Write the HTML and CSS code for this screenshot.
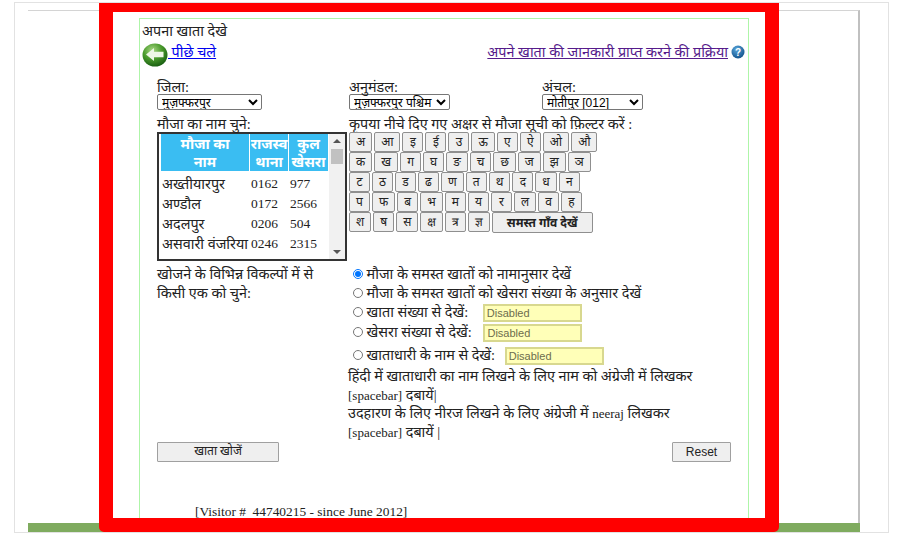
FILE: index.html
```html
<!DOCTYPE html>
<html lang="hi">
<head>
    <meta charset="UTF-8">
    <title>अपना खाता देखे</title>
    <link rel="stylesheet" href="styles.css">
</head>
<body>
    <div class="outer">
        <div class="page">
            <div class="content">
                <div class="title">अपना खाता देखे</div>
                <div class="top-links">
                    <a class="back" href="#">
                        <svg class="back-icon" viewBox="0 0 26 26" width="26" height="24" preserveAspectRatio="none">
                            <defs>
                                <radialGradient id="greenBall" cx="40%" cy="30%" r="75%">
                                    <stop offset="0" stop-color="#a9d884"/>
                                    <stop offset="0.5" stop-color="#4a9a2c"/>
                                    <stop offset="1" stop-color="#14590f"/>
                                </radialGradient>
                            </defs>
                            <circle cx="13" cy="13" r="12.5" fill="url(#greenBall)"/>
                            <path d="M4 12.5 L12 5.5 V9.5 H21.5 V15.5 H12 V19.5 Z" fill="#eef6e6"/>
                        </svg>
                        <span class="back-text"> पीछे चले</span>
                    </a>
                    <div class="help">
                        <a class="visited" href="#">अपने खाता की जानकारी प्राप्त करने की प्रक्रिया</a>
                        <svg viewBox="0 0 14 14" width="14" height="14">
                            <defs>
                                <radialGradient id="blueBall" cx="40%" cy="30%" r="75%">
                                    <stop offset="0" stop-color="#5aa6dc"/>
                                    <stop offset="1" stop-color="#0f4f88"/>
                                </radialGradient>
                            </defs>
                            <circle cx="7" cy="7" r="6.5" fill="url(#blueBall)"/>
                            <text x="7" y="10.5" text-anchor="middle" class="help-mark">?</text>
                        </svg>
                    </div>
                </div>

                <div class="selects">
                    <div class="sel-district">
                        <label>जिला:</label>
                        <select class="s1"><option>मुज़फ्फरपुर</option></select>
                    </div>
                    <div class="sel-sub">
                        <label>अनुमंडल:</label>
                        <select class="s2"><option>मुज़फ्फरपुर पश्चिम</option></select>
                    </div>
                    <div class="sel-anchal">
                        <label>अंचल:</label>
                        <select class="s3"><option>मोतीपुर [012]</option></select>
                    </div>
                </div>

                <div class="mauja-row">
                    <div class="mauja-left">
                        <div class="line">मौजा का नाम चुने:</div>
                        <div class="list-box">
                            <div class="list-inner">
                                <table class="list-table">
                                    <tr><th class="c1">मौजा का<br>नाम</th><th class="c2">राजस्व<br>थाना</th><th class="c3">कुल<br>खेसरा</th></tr>
                                    <tr><td>अख्तीयारपुर</td><td class="num">0162</td><td class="num">977</td></tr>
                                    <tr><td>अण्डौल</td><td class="num">0172</td><td class="num">2566</td></tr>
                                    <tr><td>अदलपुर</td><td class="num">0206</td><td class="num">504</td></tr>
                                    <tr><td>असवारी वंजरिया</td><td class="num">0246</td><td class="num">2315</td></tr>
                                </table>
                            </div>
                            <div class="scrollbar">
                                <span class="arrow up"></span>
                                <span class="thumb"></span>
                                <span class="arrow down"></span>
                            </div>
                        </div>
                    </div>
                    <div class="mauja-right">
                        <div class="line">कृपया नीचे दिए गए अक्षर से मौजा सूची को फ़िल्टर करें :</div>
                        <div class="key-row"><button>अ</button><button>आ</button><button>इ</button><button>ई</button><button>उ</button><button>ऊ</button><button>ए</button><button>ऐ</button><button>ओ</button><button>औ</button></div>
                        <div class="key-row"><button>क</button><button>ख</button><button>ग</button><button>घ</button><button>ङ</button><button>च</button><button>छ</button><button>ज</button><button>झ</button><button>ञ</button></div>
                        <div class="key-row"><button>ट</button><button>ठ</button><button>ड</button><button>ढ</button><button>ण</button><button>त</button><button>थ</button><button>द</button><button>ध</button><button>न</button></div>
                        <div class="key-row"><button>प</button><button>फ</button><button>ब</button><button>भ</button><button>म</button><button>य</button><button>र</button><button>ल</button><button>व</button><button>ह</button></div>
                        <div class="key-row"><button>श</button><button>ष</button><button>स</button><button>क्ष</button><button>त्र</button><button>ज्ञ</button><button class="all-btn">समस्त गाँव देखें</button></div>
                    </div>
                </div>

                <div class="search-row">
                    <div class="search-left">खोजने के विभिन्न विकल्पों में से<br>किसी एक को चुने:</div>
                    <div class="search-right">
                        <div class="opt"><input type="radio" name="o" checked> मौजा के समस्त खातों को नामानुसार देखें</div>
                        <div class="opt"><input type="radio" name="o"> मौजा के समस्त खातों को खेसरा संख्या के अनुसार देखें</div>
                        <div class="opt opt-third"><input type="radio" name="o"> खाता संख्या से देखें: <input class="dis d1" type="text" value="Disabled" disabled></div>
                        <div class="opt opt-tall"><input type="radio" name="o"> खेसरा संख्या से देखें: <input class="dis d2" type="text" value="Disabled" disabled></div>
                        <div class="opt opt-last"><input type="radio" name="o"> खाताधारी के नाम से देखें: <input class="dis d3" type="text" value="Disabled" disabled></div>
                        <p class="hint">हिंदी में खाताधारी का नाम लिखने के लिए नाम को अंग्रेजी में लिखकर<br><span class="en">[spacebar]</span> दबायें|</p>
                        <p class="hint">उदहारण के लिए नीरज लिखने के लिए अंग्रेजी में <span class="en">neeraj</span> लिखकर<br><span class="en">[spacebar]</span> दबायें |</p>
                    </div>
                </div>

                <div class="actions">
                    <button class="search-btn">खाता खोजें</button>
                    <button class="reset-btn">Reset</button>
                </div>

                <div class="visitor">[Visitor #&nbsp; 44740215 - since June 2012]</div>
            </div>
        </div>
        <div class="green-bar"></div>
    </div>
    <div class="red-box"></div>
</body>
</html>
```
FILE: styles.css
```css
html, body {
    margin: 0;
    padding: 0;
    height: 540px;
    overflow: hidden;
    background-color: white;
}
body {
    font-family: "Liberation Serif", "Noto Sans Devanagari", serif;
    font-size: 14.4px;
    color: #222;
    position: relative;
}
.outer {
    position: absolute;
    left: 14px;
    top: 2px;
    width: 873px;
    height: 529px;
    border: 1px solid #e2e2e2;
    overflow: hidden;
}
.page {
    margin: 7px 0 0 13px;
    width: 832px;
    height: 513px;
    border-top: 1px solid #d4d4d4;
    border-right: 2px solid #c0c0c0;
    box-sizing: border-box;
    padding: 7px 0 0 111px;
}
.green-bar {
    margin-left: 13px;
    width: 832px;
    height: 9px;
    background-color: #7fab5f;
}
.content {
    width: 610px;
    height: 505px;
    box-sizing: border-box;
    border: 1px solid #aef5a8;
    border-bottom: none;
    padding: 2px 0 0 2px;
    line-height: 20px;
}
.title {
    height: 20px;
}
.top-links {
    display: flex;
    justify-content: space-between;
    height: 36px;
}
.back {
    display: flex;
    align-items: flex-start;
    color: #00e;
    text-decoration: underline;
}
.back-icon {
    margin-top: 2px;
}
.back-text {
    margin-top: 1px;
    white-space: pre;
}
.help {
    display: flex;
    align-items: flex-start;
    gap: 3px;
    margin: 1px 3px 0 0;
}
.visited {
    color: #551a8b;
}
.help svg {
    margin-top: 3px;
}
.help-mark {
    font: bold 10px "Liberation Sans", sans-serif;
    fill: white;
}
.selects {
    display: flex;
    padding-left: 15px;
}
.selects label {
    display: block;
    height: 17px;
}
.sel-district {
    width: 192px;
}
.sel-sub {
    width: 193px;
}
select {
    display: block;
    height: 16px;
    padding: 0;
    font-family: "Liberation Sans", "Noto Sans Devanagari", sans-serif;
    font-size: 12px;
    background-color: white;
    border: 1px solid #767676;
    border-radius: 2px;
}
.s1 {
    width: 105px;
}
.s2 {
    width: 101px;
}
.s3 {
    width: 101px;
}
.mauja-row {
    display: flex;
    padding: 4px 0 0 15px;
}
.mauja-left {
    width: 192px;
}
.line {
    height: 18px;
    white-space: nowrap;
}
.list-box {
    display: flex;
    width: 190px;
    height: 129px;
    box-sizing: border-box;
    border: 2px solid #333;
    overflow: hidden;
}
.list-inner {
    width: 170px;
    padding-left: 1px;
    overflow: hidden;
}
.list-table {
    border-collapse: separate;
    border-spacing: 1px 0;
    width: 169px;
    table-layout: fixed;
}
.list-table th {
    background-color: #3abdf2;
    color: white;
    font-weight: bold;
    padding: 0;
    height: 37px;
    line-height: 18px;
}
.list-table .c1 {
    width: 88px;
}
.list-table .c2 {
    width: 38px;
}
.list-table td {
    padding: 0 0 0 1px;
    height: 20px;
    white-space: nowrap;
}
.list-table .num {
    font-size: 13.5px;
}
.list-table tr:nth-child(2) td {
    padding-top: 3px;
}
.scrollbar {
    width: 16px;
    margin-left: auto;
    background-color: #f1f1f1;
    position: relative;
}
.thumb {
    position: absolute;
    left: 2px;
    top: 15px;
    width: 12px;
    height: 15px;
    background-color: #c1c1c1;
}
.arrow {
    position: absolute;
    left: 4px;
    border-left: 4px solid transparent;
    border-right: 4px solid transparent;
}
.arrow.up {
    top: 5px;
    border-bottom: 4px solid #555;
}
.arrow.down {
    bottom: 5px;
    border-top: 4px solid #555;
}
.key-row {
    display: flex;
    gap: 2px;
    height: 20px;
}
.key-row button {
    height: 20px;
    min-width: 21px;
    padding: 0 6px;
    font-family: inherit;
    font-size: 12px;
    line-height: 1;
    color: #222;
    background-color: #efefef;
    border: 1px solid #8f8f8f;
    border-radius: 2px;
}
.key-row .all-btn {
    height: 21px;
    width: 101px;
    font-weight: bold;
}
.search-row {
    display: flex;
    padding-left: 15px;
    margin-top: 4px;
}
.search-left {
    width: 192px;
    line-height: 19px;
}
.search-right {
    padding-left: 3px;
    width: 380px;
    line-height: 19px;
}
.opt {
    white-space: nowrap;
    height: 19px;
}
.opt-third {
    height: 20px;
}
.opt-tall {
    height: 20px;
}
.opt-last {
    height: 21px;
    padding-top: 3px;
}
.opt input[type="radio"] {
    margin: 0 0 0 1px;
    width: 10px;
    height: 10px;
}
.dis {
    height: 18px;
    width: 99px;
    box-sizing: border-box;
    background-color: #ffffb8;
    border: 2px solid #d8d88f;
    font: 11px "Liberation Sans", sans-serif;
    color: #6d6d4d;
    padding: 0 2px;
}
.d1 {
    margin-left: 11px;
}
.d2 {
    margin-left: 8px;
}
.d3 {
    margin-left: 6px;
}
.hint {
    margin: 0 0 0 -4px;
    line-height: 18.7px;
}
.en {
    font-size: 13px;
    line-height: 0;
}
.actions {
    display: flex;
    justify-content: space-between;
    padding: 0 17px 0 15px;
}
.actions button {
    height: 20px;
    font-size: 12px;
    background-color: #efefef;
    color: #222;
    border: 1px solid #a0a0a0;
    border-radius: 1px;
    padding: 0;
}
.search-btn {
    width: 122px;
    font-family: inherit;
}
.reset-btn {
    width: 59px;
    font-family: "Liberation Sans", sans-serif;
}
.visitor {
    margin: 40px 0 0 53px;
    font-size: 13.4px;
}
.red-box {
    position: absolute;
    left: 99px;
    top: 3px;
    width: 680px;
    height: 529px;
    box-sizing: border-box;
    border-style: solid;
    border-color: #ff0000;
    border-width: 9px 14px 14px 14px;
    border-radius: 0 0 5px 5px;
}
```
